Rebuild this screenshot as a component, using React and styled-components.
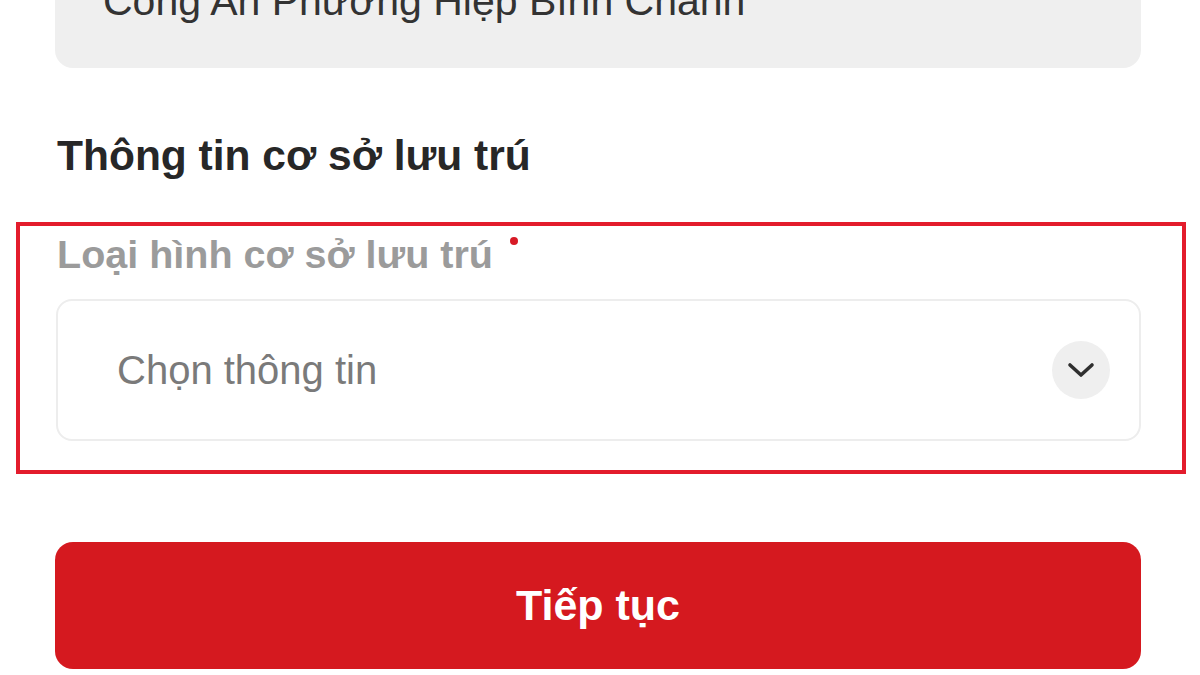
import React from 'react'
import styled, { createGlobalStyle } from 'styled-components'

const GlobalStyle = createGlobalStyle`
    html, body {
        margin: 0;
        padding: 0;
        background: #ffffff;
        overflow: hidden;
    }
    body {
        font-family: "Liberation Sans", Arial, sans-serif;
    }
`

const Page = styled.div`
    width: 1086px;
    padding-left: 55px;
    display: flex;
    flex-direction: column;
`

const InfoBox = styled.div`
    margin-top: -72px;
    height: 140px;
    box-sizing: border-box;
    background: #efefef;
    border-radius: 18px;
    padding: 49px 48px 0;
    font-size: 41px;
    line-height: 48px;
    color: #333333;
`

const SectionTitle = styled.h2`
    margin: 63px 0 0 2px;
    font-size: 42.5px;
    line-height: 50px;
    font-weight: 700;
    color: #272727;
`

const Highlight = styled.div`
    margin: 41px -45px 0 -39px;
    padding: 4px 41px 29px 36px;
    border: 4px solid #e31c2c;
    display: flex;
    flex-direction: column;
    gap: 21px;
`

const Label = styled.label`
    margin-left: 1px;
    font-size: 39.5px;
    line-height: 48px;
    font-weight: 700;
    color: #9b9b9b;
    display: flex;
    align-items: flex-start;
`

const Required = styled.span`
    width: 8px;
    height: 8px;
    border-radius: 50%;
    background: #d71a26;
    margin: 7px 0 0 17px;
`

const Select = styled.div`
    height: 142px;
    box-sizing: border-box;
    border: 2px solid #ededed;
    border-radius: 16px;
    padding: 0 29px 0 59px;
    display: flex;
    align-items: center;
    justify-content: space-between;
`

const Placeholder = styled.span`
    font-size: 40px;
    color: #7a7a7a;
`

const ChevronCircle = styled.span`
    width: 58px;
    height: 58px;
    border-radius: 50%;
    background: #efefef;
    display: flex;
    align-items: center;
    justify-content: center;
`

const Button = styled.button`
    margin-top: 68px;
    height: 127px;
    border: none;
    border-radius: 18px;
    background: #d5191f;
    color: #ffffff;
    font-family: "Liberation Sans", Arial, sans-serif;
    font-size: 43px;
    font-weight: 700;
    cursor: pointer;
`

function App() {
  return (
    <>
      <GlobalStyle />
      <Page>
        <InfoBox>Công An Phường Hiệp Bình Chánh</InfoBox>
        <SectionTitle>Thông tin cơ sở lưu trú</SectionTitle>
        <Highlight>
          <Label>
            Loại hình cơ sở lưu trú
            <Required />
          </Label>
          <Select>
            <Placeholder>Chọn thông tin</Placeholder>
            <ChevronCircle>
              <svg width="28" height="16" viewBox="0 0 28 16" fill="none">
                <path d="M3 3l11 10L25 3" stroke="#2f2f2f" strokeWidth="3.6" strokeLinecap="round" strokeLinejoin="round" />
              </svg>
            </ChevronCircle>
          </Select>
        </Highlight>
        <Button>Tiếp tục</Button>
      </Page>
    </>
  )
}

export default App
